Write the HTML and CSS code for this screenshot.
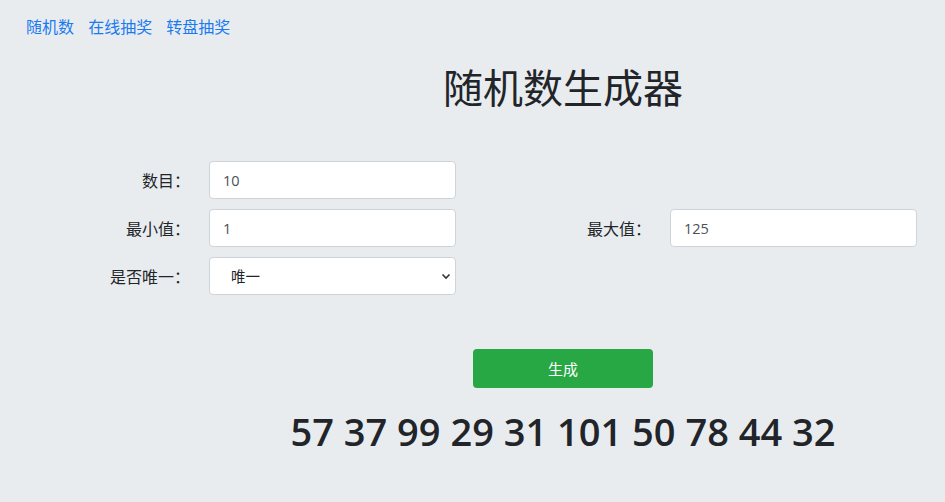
FILE: index.html
```html
<!DOCTYPE html>
<html lang="zh-CN">
  <head>
    <meta charset="UTF-8" />
    <title>随机数生成器</title>
    <link rel="stylesheet" href="styles.css">
  </head>
  <body>
    <nav class="top-nav">
      <a href="#">随机数</a>
      <a href="#">在线抽奖</a>
      <a href="#">转盘抽奖</a>
    </nav>

    <h1 class="page-title">随机数生成器</h1>

    <form class="gen-form">
      <div class="field">
        <label>数目：</label>
        <input class="form-control" type="text" value="10">
      </div>
      <div class="field"></div>

      <div class="field">
        <label>最小值：</label>
        <input class="form-control" type="text" value="1">
      </div>
      <div class="field">
        <label>最大值：</label>
        <input class="form-control" type="text" value="125">
      </div>

      <div class="field">
        <label>是否唯一：</label>
        <div class="select-wrap">
          <select class="form-control">
            <option>唯一</option>
            <option>不唯一</option>
          </select>
          <svg class="chevron" width="10" height="7" viewBox="0 0 10 7">
            <path d="M1.5 1.5 L5 5 L8.5 1.5" fill="none" stroke="#333" stroke-width="1.6"/>
          </svg>
        </div>
      </div>
      <div class="field"></div>
    </form>

    <div class="result">
      <button class="btn-generate" type="button">生成</button>
      <div class="numbers">57 37 99 29 31 101 50 78 44 32</div>
    </div>
  </body>
</html>
```

FILE: styles.css
```css
body {
  margin: 0;
  background-color: #e9ecef;
  color: #212529;
  font-family: "Open Sans", "Noto Sans CJK SC", sans-serif;
}
.top-nav {
  padding: 17px 0 0 26px;
  line-height: 20px;
  font-size: 16px;
}
.top-nav a {
  color: #1a7bf0;
  text-decoration: none;
  margin-right: 10px;
}
.page-title {
  margin: 27px 0 0 181px;
  text-align: center;
  font-size: 40px;
  line-height: 48px;
  font-weight: 400;
}
.gen-form {
  margin-top: 49px;
  padding-left: 23px;
  display: grid;
  grid-template-columns: 461px 461px;
  row-gap: 10px;
}
.field {
  display: grid;
  grid-template-columns: 167px 247px;
  column-gap: 19px;
  align-items: center;
  height: 38px;
}
.field label {
  text-align: right;
  font-size: 16px;
}
.form-control {
  box-sizing: border-box;
  width: 247px;
  height: 38px;
  padding: 0 13px;
  border: 1px solid #ced4da;
  border-radius: 4px;
  background: #fff;
  color: #495057;
  font-family: "Open Sans", "Noto Sans CJK SC", sans-serif;
  font-size: 14.5px;
}
.select-wrap {
  position: relative;
}
select.form-control {
  -webkit-appearance: none;
  appearance: none;
  padding-left: 21px;
  color: #212529;
}
.chevron {
  position: absolute;
  right: 5px;
  top: 16px;
  pointer-events: none;
}
.result {
  margin-left: 181px;
  text-align: center;
}
.btn-generate {
  margin-top: 54px;
  width: 180px;
  height: 39px;
  border: none;
  border-radius: 4px;
  background: #28a745;
  color: #fff;
  font-family: "Open Sans", "Noto Sans CJK SC", sans-serif;
  font-size: 15px;
}
.numbers {
  margin-top: 19px;
  font-size: 38px;
  line-height: 48px;
  font-weight: 600;
}
```
